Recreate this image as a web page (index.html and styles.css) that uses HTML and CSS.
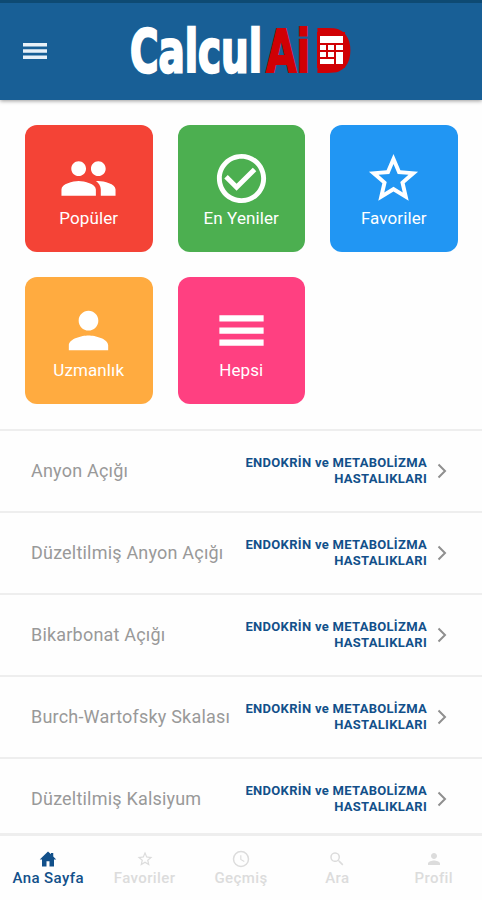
FILE: index.html
```
<!DOCTYPE html>
<html lang="tr">
  <head>
    <meta charset="UTF-8" />
    <meta name="viewport" content="width=device-width,initial-scale=1" />
    <title>CalculAiD</title>
    <link rel="stylesheet" href="styles.css">
  </head>
  <body>
    <header class="header">
      <svg class="menu" viewBox="0 0 24 18">
        <path d="M0 1h24v3.4H0zM0 7.3h24v3.4H0zM0 13.6h24V17H0z" />
      </svg>
      <svg class="logo" viewBox="-2 0 230 76">
        <g class="logo-text">
          <text x="0" y="58" textLength="132" lengthAdjust="spacingAndGlyphs">Calcul</text>
          <g class="red">
            <text x="136" y="58" textLength="44" lengthAdjust="spacingAndGlyphs">Ai</text>
            <text x="184" y="58" textLength="38" lengthAdjust="spacingAndGlyphs">D</text>
          </g>
        </g>
        <!-- calculator inside the D -->
        <rect class="red" x="188" y="19" width="26" height="34" />
        <path class="keys" d="M190 22h23v7h-23zM190 31h6v5h-6zM198 31h6v5h-6zM206 31h7v5h-7zM190 38h6v5h-6zM198 38h6v5h-6zM190 45h14v5h-14zM206 38h7v12h-7z" />
      </svg>
    </header>

    <main class="content">
      <div class="cards">
        <a class="card popular">
          <svg viewBox="0 0 24 24"><path d="M16 11c1.66 0 2.99-1.34 2.99-3S17.66 5 16 5s-3 1.34-3 3 1.34 3 3 3zm-8 0c1.66 0 2.99-1.34 2.99-3S9.66 5 8 5 5 6.34 5 8s1.34 3 3 3zm0 2c-2.33 0-7 1.17-7 3.5V19h14v-2.5c0-2.33-4.67-3.5-7-3.5zm8 0c-.29 0-.62.02-.97.05 1.16.84 1.97 1.97 1.97 3.45V19h6v-2.5c0-2.33-4.67-3.5-7-3.5z" /></svg>
          <span>Popüler</span>
        </a>
        <a class="card newest">
          <svg viewBox="0 0 24 24"><path d="M16.59 7.58L10 14.17l-3.59-3.58L5 12l5 5 8-8zM12 2C6.48 2 2 6.48 2 12s4.48 10 10 10 10-4.48 10-10S17.52 2 12 2zm0 18c-4.42 0-8-3.58-8-8s3.58-8 8-8 8 3.58 8 8-3.58 8-8 8z" /></svg>
          <span>En Yeniler</span>
        </a>
        <a class="card favorites">
          <svg viewBox="0 0 24 24"><path d="M22 9.24l-7.19-.62L12 2 9.19 8.63 2 9.24l5.46 4.73L5.82 21 12 17.27 18.18 21l-1.63-7.03L22 9.24zM12 15.4l-3.76 2.27 1-4.28-3.32-2.88 4.38-.38L12 6.1l1.71 4.04 4.38.38-3.32 2.88 1 4.28L12 15.4z" /></svg>
          <span>Favoriler</span>
        </a>
        <a class="card expert">
          <svg viewBox="0 0 24 24"><path d="M12 12c2.21 0 4-1.79 4-4s-1.79-4-4-4-4 1.79-4 4 1.79 4 4 4zm0 2c-2.67 0-8 1.34-8 4v2h16v-2c0-2.66-5.33-4-8-4z" /></svg>
          <span>Uzmanlık</span>
        </a>
        <a class="card all">
          <svg viewBox="0 0 24 24"><path d="M3 5.8h18v2.5H3zM3 10.8h18v2.5H3zM3 15.7h18v2.5H3z" /></svg>
          <span>Hepsi</span>
        </a>
      </div>

      <ul class="list">
        <li>
          <span class="name">Anyon Açığı</span>
          <span class="group">ENDOKRİN ve METABOLİZMA HASTALIKLARI</span>
          <svg class="chevron" viewBox="0 0 10 16"><path d="M1.5 1.5L8 8l-6.5 6.5" /></svg>
        </li>
        <li>
          <span class="name">Düzeltilmiş Anyon Açığı</span>
          <span class="group">ENDOKRİN ve METABOLİZMA HASTALIKLARI</span>
          <svg class="chevron" viewBox="0 0 10 16"><path d="M1.5 1.5L8 8l-6.5 6.5" /></svg>
        </li>
        <li>
          <span class="name">Bikarbonat Açığı</span>
          <span class="group">ENDOKRİN ve METABOLİZMA HASTALIKLARI</span>
          <svg class="chevron" viewBox="0 0 10 16"><path d="M1.5 1.5L8 8l-6.5 6.5" /></svg>
        </li>
        <li>
          <span class="name">Burch-Wartofsky Skalası</span>
          <span class="group">ENDOKRİN ve METABOLİZMA HASTALIKLARI</span>
          <svg class="chevron" viewBox="0 0 10 16"><path d="M1.5 1.5L8 8l-6.5 6.5" /></svg>
        </li>
        <li>
          <span class="name">Düzeltilmiş Kalsiyum</span>
          <span class="group">ENDOKRİN ve METABOLİZMA HASTALIKLARI</span>
          <svg class="chevron" viewBox="0 0 10 16"><path d="M1.5 1.5L8 8l-6.5 6.5" /></svg>
        </li>
      </ul>
    </main>

    <nav class="tabs">
      <a class="tab active">
        <svg viewBox="0 0 24 24"><path d="M12 2L1 12.5h3V22h6v-7h4v7h6v-9.5h3L19 8.7V4h-3v1.8z" /></svg>
        <span>Ana Sayfa</span>
      </a>
      <a class="tab">
        <svg viewBox="0 0 24 24"><path d="M22 9.24l-7.19-.62L12 2 9.19 8.63 2 9.24l5.46 4.73L5.82 21 12 17.27 18.18 21l-1.63-7.03L22 9.24zM12 15.4l-3.76 2.27 1-4.28-3.32-2.88 4.38-.38L12 6.1l1.71 4.04 4.38.38-3.32 2.88 1 4.28L12 15.4z" /></svg>
        <span>Favoriler</span>
      </a>
      <a class="tab">
        <svg viewBox="0 0 24 24"><path d="M12 1a11 11 0 1 0 0 22 11 11 0 0 0 0-22zm0 20a9 9 0 1 1 0-18 9 9 0 0 1 0 18zm.5-14H11v6l5 3 .8-1.2-4.3-2.6z" /></svg>
        <span>Geçmiş</span>
      </a>
      <a class="tab">
        <svg viewBox="0 0 24 24"><path d="M15.5 14h-.79l-.28-.27A6.5 6.5 0 1 0 13.73 14.43l.27.28v.79l5 5L20.5 19zm-6 0a4.5 4.5 0 1 1 0-9 4.5 4.5 0 0 1 0 9z" /></svg>
        <span>Ara</span>
      </a>
      <a class="tab">
        <svg viewBox="0 0 24 24"><path d="M12 12c2.21 0 4-1.79 4-4s-1.79-4-4-4-4 1.79-4 4 1.79 4 4 4zm0 2c-2.67 0-8 1.34-8 4v2h16v-2c0-2.66-5.33-4-8-4z" /></svg>
        <span>Profil</span>
      </a>
    </nav>
  </body>
</html>
```
FILE: styles.css
```
* {
  --blue: #185f96;
  --navy: #12508a;
  --line: #eeeeee;
  box-sizing: border-box;
}
body {
  margin: 0;
  height: 900px;
  display: flex;
  flex-direction: column;
  overflow: hidden;
  background: #fefefe;
  font-family: Roboto, sans-serif;
}
.header {
  display: flex;
  align-items: center;
  height: 100px;
  flex: none;
  padding-left: 23px;
  background: var(--blue);
  border-top: 3px solid #0e4a73;
  box-shadow: 0 1px 4px rgba(0, 0, 0, 0.4);
}
.menu {
  width: 24px;
  height: 18px;
  margin-bottom: 1px;
  fill: #e8f1f8;
}
.logo {
  width: 230px;
  height: 76px;
  margin-left: 81px;
  overflow: visible;
}
.logo-text {
  font-family: "DejaVu Sans", sans-serif;
  font-size: 58px;
  font-weight: 700;
  fill: #fff;
  stroke: #fff;
  stroke-width: 2.5px;
}
.red {
  fill: #d00004;
  stroke: #d00004;
  stroke-width: 2px;
}
.keys {
  fill: #fff;
}
.content {
  flex: 1;
  min-height: 0;
}
.cards {
  display: grid;
  grid-template-columns: repeat(3, 127.5px);
  grid-auto-rows: 127px;
  gap: 25px;
  padding: 25px;
}
.card {
  display: flex;
  flex-direction: column;
  align-items: center;
  padding-top: 24px;
  border-radius: 12px;
  color: #fff;
  font-size: 17px;
  line-height: 20px;
  letter-spacing: 0.1px;
}
.card svg {
  width: 59px;
  height: 59px;
  fill: #fff;
}
.popular {
  background: #f44336;
}
.newest {
  background: #4caf50;
}
.favorites {
  background: #2196f3;
}
.expert {
  background: #ffab40;
}
.all {
  background: #ff4081;
}
.list {
  margin: 0;
  padding: 0;
  list-style: none;
}
.list li {
  display: flex;
  align-items: center;
  height: 82px;
  padding: 0 35px 0 31px;
  border-top: 2px solid var(--line);
}
.name {
  flex: 1;
  padding-bottom: 2px;
  color: #999;
  font-size: 18px;
  letter-spacing: 0.2px;
  white-space: nowrap;
}
.group {
  width: 190px;
  color: var(--navy);
  font-size: 13px;
  font-weight: 700;
  line-height: 16px;
  letter-spacing: 0.3px;
  text-align: right;
}
.chevron {
  width: 10px;
  height: 16px;
  margin-left: 10px;
  fill: none;
  stroke: #8f8f8f;
  stroke-width: 2px;
}
.tabs {
  display: grid;
  grid-template-columns: repeat(5, 1fr);
  flex: none;
  height: 67px;
  border-top: 3px solid var(--line);
  background: #fefefe;
}
.tab {
  display: flex;
  flex-direction: column;
  align-items: center;
  padding-top: 14px;
  color: #dcdcdc;
  font-size: 15px;
  font-weight: 500;
  line-height: 18px;
  letter-spacing: 0.4px;
}
.tab svg {
  width: 18px;
  height: 18px;
  margin-bottom: 1px;
  fill: currentColor;
}
.active {
  color: var(--navy);
}
```
